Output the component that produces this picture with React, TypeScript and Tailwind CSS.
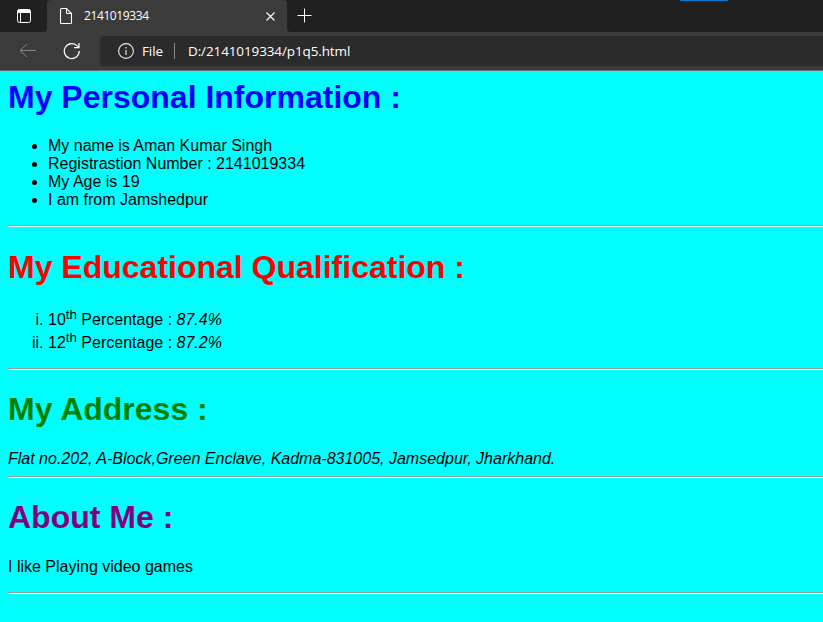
import type { ReactNode } from "react";

function Heading({ color, children }: { color: string; children: ReactNode }) {
  return <h1 className={`text-[32px] leading-[36px] font-bold whitespace-nowrap ${color}`}>{children}</h1>;
}

function Rule() {
  return <hr className="h-[2px] border-0 border-t border-t-[#9a9a9a] bg-[#f0f0f0]" />;
}

function TabStrip() {
  return (
    <div className="flex h-8 bg-[#202020] text-white">
      <div className="flex h-8 w-[47px] items-center justify-center bg-[#3b3b3b]">
        <div className="flex h-8 w-full items-center rounded-br bg-[#202020] pl-4">
          <svg width="16" height="16" viewBox="0 0 16 16" fill="none" stroke="white">
            <rect x="1.5" y="1.5" width="13" height="13" rx="2" />
            <path d="M2 2h12v2.5H2z" fill="white" />
            <path d="M4.5 5v9" />
          </svg>
        </div>
      </div>
      <div className="flex h-8 w-[240px] items-center rounded-t bg-[#3b3b3b] pl-3">
        <svg width="14" height="18" viewBox="0 0 14 18" fill="none" stroke="white" strokeWidth="1.1">
          <path d="M2.5 1.5h5l5 5v9a1 1 0 0 1-1 1h-9a1 1 0 0 1-1-1v-13a1 1 0 0 1 1-1zM7.5 1.5v4a1 1 0 0 0 1 1h4" />
        </svg>
        <span className="ml-[11px] w-[182px] text-[12px] leading-4 tracking-[-0.4px]">2141019334</span>
        <svg width="9" height="9" viewBox="0 0 9 9" fill="none" stroke="white" strokeWidth="1.1">
          <path d="M.5 .5l8 8M8.5 .5l-8 8" />
        </svg>
      </div>
      <div className="flex h-8 flex-1 items-center bg-[#3b3b3b]">
        <div className="flex h-8 w-full justify-between rounded-bl bg-[#202020] pl-[10px]">
          <svg width="15" height="15" viewBox="0 0 15 15" fill="none" stroke="white" className="mt-2">
            <path d="M.5 7.5h14M7.5 .5v14" />
          </svg>
          <div className="mr-[95px] h-px w-12 bg-[#0078d4]" />
        </div>
      </div>
    </div>
  );
}

function Toolbar() {
  return (
    <div className="flex h-[39px] items-center border-b border-[#696969] bg-[#3b3b3b] text-white">
      <svg width="18" height="16" viewBox="0 0 18 16" fill="none" stroke="#858585" className="ml-[19px]">
        <path d="M8 1L1 7.5 8 14M1 7.5h16" />
      </svg>
      <svg width="18" height="18" viewBox="0 0 18 18" fill="none" stroke="white" strokeWidth="1.2" className="ml-[26px]">
        <path d="M16.3 9A7.5 7.5 0 1 1 14.5 4.2L16 5.5M16 1v4.7h-5" />
      </svg>
      <div className="ml-[19px] flex h-[30px] flex-1 items-center rounded-l bg-[#2b2b2b] pl-[18px] text-[14px] leading-5">
        <svg width="16" height="16" viewBox="0 0 16 16" fill="none" stroke="#e8e8e8">
          <circle cx="8" cy="8" r="7.4" strokeWidth="1.1" />
          <path d="M8 7v5M8 4v1.5" strokeWidth="1.2" />
        </svg>
        <span className="ml-2 w-8 text-[13.5px] tracking-[-0.1px]">File</span>
        <span className="h-4 w-px bg-[#888888]" />
        <span className="ml-[13px] text-[13.5px] tracking-[-0.12px] whitespace-nowrap">D:/2141019334/p1q5.html</span>
      </div>
    </div>
  );
}

export default function App() {
  return (
    <div className="h-[622px] w-[823px] overflow-hidden bg-[#00ffff]">
      <header className="font-['Open_Sans','Noto_Sans',sans-serif]">
        <TabStrip />
        <Toolbar />
      </header>
      <main className="pt-2 pl-2 font-['Liberation_Sans',Arial,sans-serif] text-[16px] leading-[18px] text-black">
        <section>
          <Heading color="text-[#0000ff]">My Personal Information :</Heading>
          <ul className="mt-[22px] mb-4 list-disc pl-10">
            <li>My name is Aman Kumar Singh</li>
            <li>Registrastion Number : 2141019334</li>
            <li>My Age is 19</li>
            <li>I am from Jamshedpur</li>
          </ul>
          <Rule />
        </section>
        <section className="pt-[22px]">
          <Heading color="text-[#ff0000]">My Educational Qualification :</Heading>
          <ol className="mt-[22px] mb-[15px] list-[lower-roman] pl-10 leading-[normal]">
            <li className="h-[23px]">10<sup className="top-0 align-super text-[13.333px] leading-[normal]">th</sup> Percentage : <i>87.4%</i></li>
            <li className="h-[23px]">12<sup className="top-0 align-super text-[13.333px] leading-[normal]">th</sup> Percentage : <i>87.2%</i></li>
          </ol>
          <Rule />
        </section>
        <section className="pt-[21px]">
          <Heading color="text-[#008000]">My Address :</Heading>
          <address className="mt-[23px] mb-[8px]">Flat no.202, A-Block,Green Enclave, Kadma-831005, Jamsedpur, Jharkhand.</address>
          <Rule />
        </section>
        <section className="pt-[21px]">
          <Heading color="text-[#800080]">About Me :</Heading>
          <p className="mt-[23px] mb-[16px]">I like Playing video games</p>
          <Rule />
        </section>
      </main>
    </div>
  );
}
